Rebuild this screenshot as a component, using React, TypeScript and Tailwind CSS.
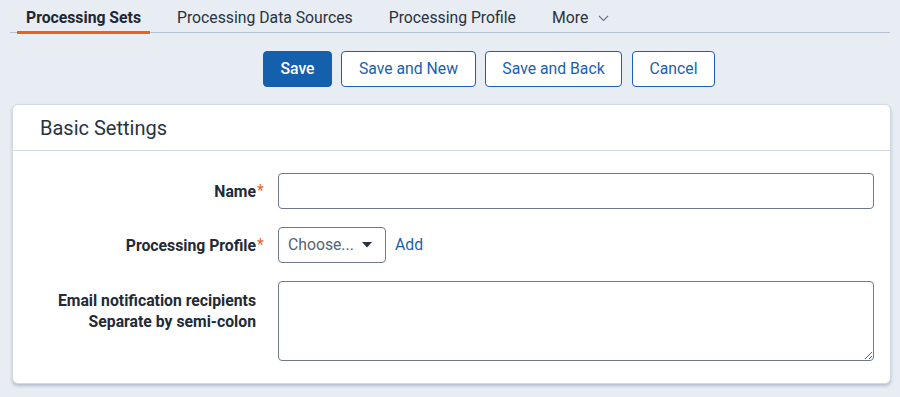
import React from "react";

export default function App() {
  const tabs = ["Processing Sets", "Processing Data Sources", "Processing Profile"];
  return (
    <div className="min-h-[397px] w-[900px] bg-[#e8ecf3] font-['Roboto',sans-serif] text-[#222a37]">
      {/* Tabs */}
      <div className="mx-[10px] flex h-[33px] gap-[18px] border-b border-[#b7c2d3] pl-[7px]">
        {tabs.map((t, i) => (
          <div
            key={t}
            className={
              "relative flex h-[33px] items-center px-[9px] pt-[2px] text-[15.75px] " +
              (i === 0 ? "font-bold text-[#1f2733]" : "text-[#2a3240]")
            }
          >
            {t}
            {i === 0 && <div className="absolute bottom-[-1px] left-0 right-0 h-[3px] bg-[#e8631d]" />}
          </div>
        ))}
        <div className="flex h-[33px] items-center gap-[10px] px-[9px] pt-[2px] text-[15.75px] text-[#2a3240]">
          More
          <svg width="11" height="7" viewBox="0 0 11 7" className="mt-[2px]">
            <path d="M1 1l4.5 4.5L10 1" fill="none" stroke="#6a7384" strokeWidth="1.1" />
          </svg>
        </div>
      </div>

      {/* Buttons */}
      <div className="ml-[263px] mt-[18px] flex gap-[9px]">
        <button className="flex h-[36px] w-[69px] items-center justify-center rounded-[4px] border border-[#1460ad] bg-[#1460ad] text-[15.75px] font-medium text-white">
          Save
        </button>
        <button className="flex h-[36px] w-[135px] items-center justify-center rounded-[4px] border border-[#1a5fb0] bg-white text-[15.75px] text-[#1a5fb0]">
          Save and New
        </button>
        <button className="flex h-[36px] w-[137px] items-center justify-center rounded-[4px] border border-[#1a5fb0] bg-white text-[15.75px] text-[#1a5fb0]">
          Save and Back
        </button>
        <button className="ml-[1px] flex h-[36px] w-[83px] items-center justify-center rounded-[4px] border border-[#1a5fb0] bg-white text-[15.75px] text-[#1a5fb0]">
          Cancel
        </button>
      </div>

      {/* Card */}
      <div className="ml-[12px] mt-[17px] w-[879px] rounded-[6px] border border-[#d3d9e3] bg-white shadow-[0_2px_3px_rgba(120,135,160,0.45)]">
        <div className="flex h-[46px] items-center border-b border-[#d3d9e1] pl-[27px] text-[20px] text-[#2a3240]">
          Basic Settings
        </div>
        <div className="flex flex-col gap-[18px] pb-[22px] pr-[16px] pt-[22px]">
          <div className="flex items-center">
            <div className="relative w-[243px] text-right text-[15.75px] font-bold leading-[21px]">
              Name
              <span className="absolute left-[244px] top-[-1px] font-normal text-[#e8631d]">*</span>
            </div>
            <input className="ml-[22px] h-[36px] w-[596px] rounded-[4px] border border-[#6f798b] bg-white outline-none" />
          </div>
          <div className="flex items-center">
            <div className="relative w-[243px] text-right text-[15.75px] font-bold leading-[21px]">
              Processing Profile
              <span className="absolute left-[244px] top-[-1px] font-normal text-[#e8631d]">*</span>
            </div>
            <div className="ml-[22px] flex h-[36px] w-[108px] items-center justify-between rounded-[4px] border border-[#6f798b] bg-white pl-[9px] pr-[13px] text-[15.75px] text-[#566174]">
              <span>Choose...</span>
              <svg width="10" height="6" viewBox="0 0 10 6">
                <path d="M0 0h10L5 5.5z" fill="#2a3240" />
              </svg>
            </div>
            <span className="ml-[9px] text-[15.75px] text-[#1a5fb0]">Add</span>
          </div>
          <div className="flex items-start">
            <div className="w-[243px] pt-[9px] text-right text-[15.75px] font-bold leading-[21px]">
              Email notification recipients
              <br />
              Separate by semi-colon
            </div>
            <textarea className="ml-[22px] block h-[80px] w-[596px] rounded-[4px] border border-[#6f798b] bg-white outline-none" />
          </div>
        </div>
      </div>
    </div>
  );
}
